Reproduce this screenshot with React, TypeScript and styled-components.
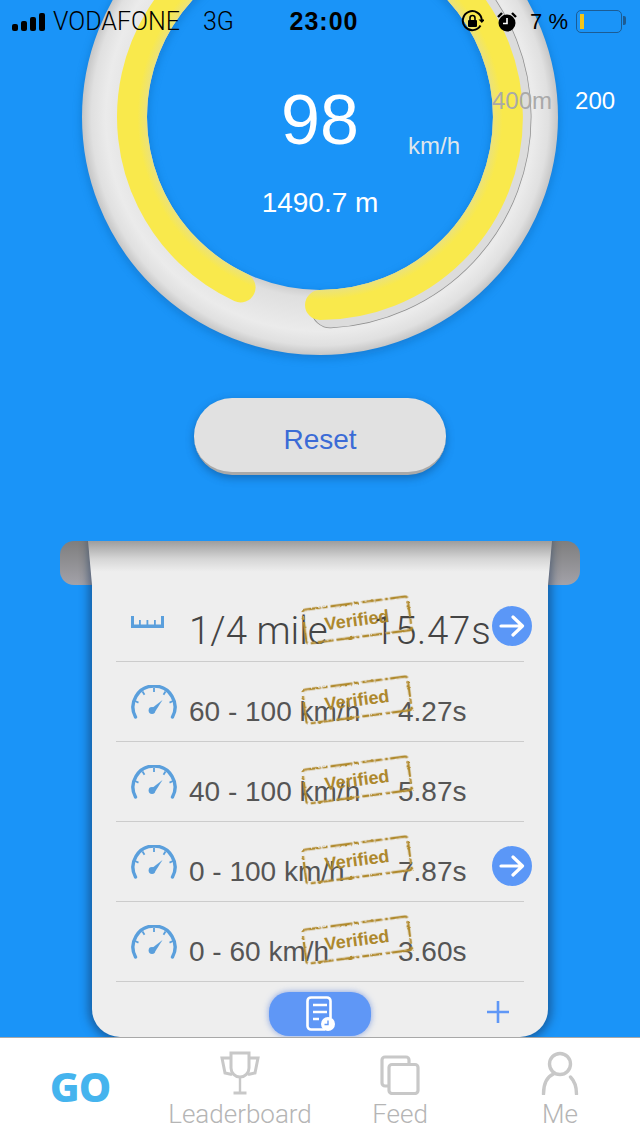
import styled, { createGlobalStyle } from "styled-components";

const GlobalStyle = createGlobalStyle`
  html, body {
    margin: 0;
    padding: 0;
    background: #1a94f8;
  }
  * {
    box-sizing: border-box;
  }
`;

const CX = 320;
const CY = 117;

// point on a circle around the gauge centre, angle 0 = straight down, going counter clockwise on screen
const polar = (r: number, deg: number) => {
  const a = (deg * Math.PI) / 180;
  return `${CX + r * Math.sin(a)} ${CY + r * Math.cos(a)}`;
};

const arc = (r: number, from: number, to: number) =>
  `M ${polar(r, from)} A ${r} ${r} 0 ${to - from > 180 ? 1 : 0} 0 ${polar(r, to)}`;

const Gauge = () => (
  <GaugeSvg viewBox="0 0 640 398" aria-hidden="true">
    <defs>
      <radialGradient id="ring" gradientUnits="userSpaceOnUse" cx={CX} cy={CY} r="238">
        <stop offset="0.727" stopColor="#d0d0d0" />
        <stop offset="0.76" stopColor="#dfdfdf" />
        <stop offset="0.9" stopColor="#ebebeb" />
        <stop offset="0.96" stopColor="#e0e0e0" />
        <stop offset="1" stopColor="#c6c6c6" />
      </radialGradient>
      <radialGradient id="fuel" gradientUnits="userSpaceOnUse" cx={CX} cy={CY} r="205">
        <stop offset="0.845" stopColor="#ebe27a" />
        <stop offset="0.89" stopColor="#f9e94c" />
        <stop offset="1" stopColor="#f9e94c" />
      </radialGradient>
      <filter id="soft" x="-20%" y="-20%" width="140%" height="140%">
        <feGaussianBlur stdDeviation="4" />
      </filter>
    </defs>
    <circle
      cx={CX}
      cy={CY + 3}
      r="205.500"
      fill="none"
      stroke="#0f5fa8"
      strokeWidth="67"
      opacity="0.4"
      filter="url(#soft)"
    />
    <circle cx={CX} cy={CY} r="205.500" fill="none" stroke="url(#ring)" strokeWidth="65" />
    <path d={arc(192.500, 3, 178)} fill="none" stroke="#8f8f8f" strokeWidth="38" strokeLinecap="round" />
    <path d={arc(192.500, 3, 178)} fill="none" stroke="#dcdcdc" strokeWidth="36.500" strokeLinecap="round" />
    <path
      d={`${arc(188, 0, 180)} ${arc(188, 180, 335).replace("M", "L")}`}
      fill="none"
      stroke="url(#fuel)"
      strokeWidth="30"
      strokeLinecap="round"
    />
  </GaugeSvg>
);

const Signal = () => (
  <svg width="34" height="18" viewBox="0 0 34 18" fill="#000" aria-hidden="true">
    <rect x="0" y="11" width="6" height="7" rx="2" />
    <rect x="9" y="8" width="6" height="10" rx="2" />
    <rect x="18" y="4" width="6" height="14" rx="2" />
    <rect x="27" y="0" width="6" height="18" rx="2" />
  </svg>
);

const RotationLock = () => (
  <svg width="23" height="23" viewBox="0 0 23 23" fill="none" aria-hidden="true">
    <path d="M19.500 15.500A9.500 9.500 0 1 1 20.800 10" stroke="#000" strokeWidth="2" />
    <path d="M17.500 9.500h6.500l-3.200 3.600z" fill="#000" />
    <rect x="7" y="10" width="9" height="7" rx="1" fill="#000" />
    <path d="M9 10V8a2.500 2.500 0 0 1 5 0v2" stroke="#000" strokeWidth="1.600" />
  </svg>
);

const Alarm = () => (
  <svg width="20" height="20" viewBox="0 0 20 20" aria-hidden="true">
    <circle cx="10" cy="11" r="8.500" fill="#000" />
    <path d="M10 6v5.500H6" fill="none" stroke="#fff" strokeWidth="1.600" />
    <path d="M1 5l4-4M19 5l-4-4" stroke="#000" strokeWidth="2.400" />
  </svg>
);

const Battery = () => (
  <BatteryShell>
    <BatteryLevel />
  </BatteryShell>
);

const SpeedIcon = () => (
  <svg width="46" height="34" viewBox="0 0 46 34" fill="none" stroke="#5a9fdc" aria-hidden="true">
    <path d="M4.500 32A21 21 0 1 1 41.500 32" strokeWidth="3.400" strokeLinecap="round" />
    <path
      d="M23 3v4M11.500 6.500l2 3.200M34.500 6.500l-2 3.200M4 16l3.500 1.600M42 16l-3.500 1.600"
      strokeWidth="1.800"
    />
    <path d="M20.500 23.500l11-8.500-7 11z" fill="#5a9fdc" stroke="none" />
    <circle cx="21" cy="25.500" r="3.400" fill="#5a9fdc" stroke="none" />
  </svg>
);

const RulerIcon = () => (
  <svg width="33" height="12" viewBox="0 0 33 12" fill="#5a9fdc" aria-hidden="true">
    <rect x="0" y="8.500" width="33" height="3.500" />
    <rect x="0" y="0" width="3" height="10" />
    <rect x="8" y="4" width="1.800" height="6" />
    <rect x="15.500" y="4" width="1.800" height="6" />
    <rect x="23" y="4" width="1.800" height="6" />
    <rect x="30" y="0" width="3" height="10" />
  </svg>
);

const StampFrame = () => (
  <StampSvg viewBox="0 0 110 38" fill="none" aria-hidden="true">
    <defs>
      <filter id="grunge" x="-5%" y="-15%" width="110%" height="130%">
        <feTurbulence type="fractalNoise" baseFrequency="0.35" numOctaves="2" seed="4" />
        <feDisplacementMap in="SourceGraphic" scale="2.500" />
      </filter>
    </defs>
    <g filter="url(#grunge)">
      <rect
        x="2"
        y="2"
        width="106"
        height="34"
        rx="2.500"
        stroke="#b08a2e"
        strokeWidth="2.400"
        strokeDasharray="16 2 5 3 22 2 4 4 12 1 7 3 3 2 18 3"
      />
      <rect
        x="2.500"
        y="2.500"
        width="105"
        height="33"
        rx="2"
        stroke="#c4a258"
        strokeWidth="1"
        strokeDasharray="5 9 3 14"
      />
    </g>
  </StampSvg>
);

const ArrowBadge = () => (
  <Arrow>
    <svg width="28" height="26" viewBox="0 0 28 26" fill="none" aria-hidden="true">
      <path
        d="M3 13h21M15 4l9.500 9L15 22"
        stroke="#fff"
        strokeWidth="3.200"
        strokeLinecap="round"
        strokeLinejoin="round"
      />
    </svg>
  </Arrow>
);

const HistoryIcon = () => (
  <svg width="30" height="36" viewBox="0 0 30 36" fill="none" aria-hidden="true">
    <path
      d="M20 33.500H6a3.500 3.500 0 0 1-3.500-3.500V5A3.500 3.500 0 0 1 6 1.500h16A3.500 3.500 0 0 1 25.500 5v17"
      stroke="#fff"
      strokeWidth="2.600"
    />
    <path d="M8 9h14M8 16h14M8 23h6" stroke="#fff" strokeWidth="2.400" />
    <circle cx="23" cy="28" r="7" fill="#fff" />
    <path d="M23 24.500V28.500h-3.500" stroke="#5f97f6" strokeWidth="1.400" />
  </svg>
);

const TrophyIcon = () => (
  <svg width="40" height="44" viewBox="0 0 40 44" fill="none" stroke="#c8c8c8" strokeWidth="3" aria-hidden="true">
    <path d="M11 2h18v15a9 9 0 0 1-18 0z" />
    <path d="M11 7H2l3 15 7 1.500M29 7h9l-3 15-7 1.500" />
    <path d="M20 26v15" strokeWidth="2.400" />
    <path d="M13.500 42h13" />
  </svg>
);

const FeedIcon = () => (
  <svg width="40" height="40" viewBox="0 0 40 40" fill="none" stroke="#c8c8c8" strokeWidth="3.200" aria-hidden="true">
    <path d="M8 31H5a3 3 0 0 1-3-3V5a3 3 0 0 1 3-3h21a3 3 0 0 1 3 3v4" />
    <rect x="9" y="9.500" width="29" height="29" rx="3" />
  </svg>
);

const PersonIcon = () => (
  <svg width="38" height="44" viewBox="0 0 38 44" fill="none" stroke="#c8c8c8" strokeWidth="3.400" aria-hidden="true">
    <circle cx="19" cy="13" r="10.500" />
    <path d="M2.500 43c0-9 3-17 10-20M35.500 43c0-7-2-13-6-17" strokeLinecap="round" />
  </svg>
);

const records = [
  { id: "quarter", label: "1/4 mile", time: "15.47s", lead: true, arrow: true },
  { id: "60-100", label: "60 - 100 km/h", time: "4.27s", lead: false, arrow: false },
  { id: "40-100", label: "40 - 100 km/h", time: "5.87s", lead: false, arrow: false },
  { id: "0-100", label: "0 - 100 km/h", time: "7.87s", lead: false, arrow: true },
  { id: "0-60", label: "0 - 60 km/h", time: "3.60s", lead: false, arrow: false },
];

const App = () => {
  return (
    <Page>
      <GlobalStyle />
      <StatusBar>
        <StatusGroup>
          <Signal />
          <Carrier>VODAFONE</Carrier>
          <Network>3G</Network>
        </StatusGroup>
        <Clock>23:00</Clock>
        <StatusGroup>
          <RotationLock />
          <AlarmSlot>
            <Alarm />
          </AlarmSlot>
          <Percent>7 %</Percent>
          <Battery />
        </StatusGroup>
      </StatusBar>

      <GaugeArea>
        <Gauge />
        <Speed>98</Speed>
        <Unit>km/h</Unit>
        <Distance>1490.7 m</Distance>
        <Targets>
          <Target>400m</Target>
          <Target $active>200</Target>
        </Targets>
      </GaugeArea>

      <ResetButton>Reset</ResetButton>

      <Scroll>
        <Roller />
        <Sheet>
          {records.map((record) => (
            <Row key={record.id} $lead={record.lead}>
              <RowIcon $lead={record.lead}>{record.lead ? <RulerIcon /> : <SpeedIcon />}</RowIcon>
              <Label $lead={record.lead}>{record.label}</Label>
              <Time $lead={record.lead}>{record.time}</Time>
              <Stamp>
                <StampFrame />
                <StampText>Verified</StampText>
              </Stamp>
              {record.arrow && <ArrowBadge />}
            </Row>
          ))}
          <SheetFooter>
            <span />
            <HistoryButton>
              <HistoryIcon />
            </HistoryButton>
            <AddButton>
              <svg width="24" height="24" viewBox="0 0 24 24" aria-hidden="true">
                <path d="M12 1v22M1 12h22" stroke="#5f97f6" strokeWidth="2.600" />
              </svg>
            </AddButton>
          </SheetFooter>
        </Sheet>
      </Scroll>

      <TabBar>
        <Tab>
          <GoMark>GO</GoMark>
        </Tab>
        <Tab>
          <TrophyIcon />
          <TabLabel>Leaderboard</TabLabel>
        </Tab>
        <Tab>
          <FeedIcon />
          <TabLabel>Feed</TabLabel>
        </Tab>
        <Tab>
          <PersonIcon />
          <TabLabel>Me</TabLabel>
        </Tab>
      </TabBar>
    </Page>
  );
};

const Page = styled.div`
  position: relative;
  display: flex;
  flex-direction: column;
  align-items: center;
  width: 640px;
  height: 1136px;
  overflow: hidden;
  background: #1a94f8;
  font-family: "Liberation Sans", Arial, sans-serif;
`;

const StatusBar = styled.div`
  position: absolute;
  z-index: 3;
  top: 7px;
  left: 12px;
  right: 18px;
  display: grid;
  grid-template-columns: 1fr auto 1fr;
  align-items: center;
  height: 28px;
  color: #000;
  font-size: 22px;

  & > div:last-child {
    justify-self: end;
  }
`;

const StatusGroup = styled.div`
  display: flex;
  align-items: center;
`;

const Carrier = styled.span`
  margin-left: 7px;
  font-family: "Roboto", sans-serif;
  font-weight: 300;
  font-size: 25px;
`;

const Network = styled.span`
  margin-left: 23px;
  font-family: "Roboto", sans-serif;
  font-weight: 300;
  font-size: 25px;
`;

const Clock = styled.span`
  margin-left: 14px;
  font-weight: 700;
  font-size: 25px;
  letter-spacing: 1px;
`;

const AlarmSlot = styled.span`
  display: flex;
  margin-left: 13px;
`;

const Percent = styled.span`
  margin: 0 8px 0 13px;
`;

const BatteryShell = styled.div`
  position: relative;
  width: 46px;
  height: 23px;
  padding: 3px;
  border: 1.500px solid #1c5c94;
  border-radius: 5px;

  &::after {
    content: "";
    position: absolute;
    top: 5px;
    right: -5px;
    width: 3px;
    height: 9px;
    border-radius: 0 2px 2px 0;
    background: #1c5c94;
  }
`;

const BatteryLevel = styled.div`
  width: 4px;
  height: 100%;
  background: #f5c518;
`;

const GaugeArea = styled.div`
  position: relative;
  flex: none;
  width: 640px;
  height: 398px;
`;

const GaugeSvg = styled.svg`
  display: block;
  width: 640px;
  height: 398px;
`;

const Speed = styled.div`
  position: absolute;
  top: 80px;
  left: 0;
  width: 640px;
  color: #fff;
  font-size: 70px;
  line-height: 80px;
  text-align: center;
`;

const Unit = styled.div`
  position: absolute;
  top: 133px;
  left: 408px;
  color: #dfe6ec;
  font-size: 24px;
  line-height: 26px;
`;

const Distance = styled.div`
  position: absolute;
  top: 187px;
  left: 0;
  width: 640px;
  color: #fff;
  font-size: 28px;
  line-height: 32px;
  text-align: center;
`;

const Targets = styled.div`
  position: absolute;
  top: 87px;
  left: 492px;
  display: flex;
  gap: 23px;
`;

const Target = styled.span<{ $active?: boolean }>`
  color: ${(p) => (p.$active ? "#fff" : "#a9a9a9")};
  font-size: 24px;
  line-height: 28px;
`;

const ResetButton = styled.button`
  flex: none;
  width: 252px;
  height: 77px;
  padding: 10px 0 0;
  border: none;
  border-bottom: 3px solid #a9a9a9;
  border-radius: 38px;
  background: #e1e1e1;
  box-shadow: 0 3px 8px rgba(10, 60, 110, 0.45);
  color: #3b6bd6;
  font-family: inherit;
  font-size: 28px;
`;

const Scroll = styled.div`
  position: relative;
  flex: 1;
  display: flex;
  flex-direction: column;
  align-items: center;
  width: 520px;
  margin-top: 66px;
`;

const Roller = styled.div`
  flex: none;
  width: 520px;
  height: 44px;
  border-radius: 14px;
  background: linear-gradient(#7e7e7e, #a3a2a9);
`;

const Sheet = styled.div`
  position: relative;
  flex: 1;
  width: 456px;
  margin-top: -44px;
  padding: 41px 24px 0;
  border-radius: 0 0 28px 28px;
  background: #eeeeee;
  box-shadow: 0 0 9px 4px rgba(20, 50, 90, 0.5);
  clip-path: inset(0 -20px 0 -20px);

  &::before {
    content: "";
    position: absolute;
    top: 0;
    left: -4px;
    right: -4px;
    height: 44px;
    clip-path: polygon(0 0, 100% 0, calc(100% - 4px) 100%, 4px 100%);
    background: linear-gradient(#9d9d9d 0%, #d5d5d5 40%, #eeeeee 70%);
  }
`;

const Row = styled.div<{ $lead: boolean }>`
  position: relative;
  display: grid;
  grid-template-columns: 73px ${(p) => (p.$lead ? "184px" : "209px")} auto;
  align-items: end;
  height: 80px;
  padding-bottom: ${(p) => (p.$lead ? "8px" : "15px")};
  border-bottom: 1px solid #cccccc;
`;

const RowIcon = styled.div<{ $lead: boolean }>`
  display: flex;
  margin: 0 0 ${(p) => (p.$lead ? "25px" : "7px")} 15px;
`;

const Label = styled.span<{ $lead: boolean }>`
  color: ${(p) => (p.$lead ? "#444444" : "#555555")};
  font-family: ${(p) => (p.$lead ? '"Roboto", sans-serif' : "inherit")};
  font-weight: ${(p) => (p.$lead ? 300 : 400)};
  font-size: ${(p) => (p.$lead ? "38.500px" : "28px")};
  line-height: ${(p) => (p.$lead ? "44px" : "28px")};
  white-space: nowrap;
`;

const Time = styled(Label)`
  letter-spacing: ${(p) => (p.$lead ? "0.7px" : "0")};
`;

const Stamp = styled.div`
  position: absolute;
  top: 19px;
  left: 186px;
  display: flex;
  align-items: center;
  justify-content: center;
  width: 110px;
  height: 38px;
  transform: rotate(-7.500deg);
`;

const StampSvg = styled.svg`
  position: absolute;
  inset: 0;
`;

const StampText = styled.span`
  color: #ad882d;
  font-weight: 700;
  font-size: 18px;
`;

const Arrow = styled.div`
  position: absolute;
  top: 24px;
  right: -8px;
  display: flex;
  align-items: center;
  justify-content: center;
  width: 40px;
  height: 40px;
  border-radius: 50%;
  background: #5b97f7;
`;

const SheetFooter = styled.div`
  display: grid;
  grid-template-columns: 1fr 102px 1fr;
  align-items: start;
  height: 55px;
  padding-top: 10px;
`;

const HistoryButton = styled.div`
  display: flex;
  align-items: center;
  justify-content: center;
  height: 44px;
  border-radius: 20px;
  background: #5f97f6;
  box-shadow: 0 0 6px rgba(60, 110, 220, 0.6);
`;

const AddButton = styled.div`
  display: flex;
  justify-content: flex-end;
  margin: 8px 14px 0 0;
`;

const TabBar = styled.div`
  position: relative;
  z-index: 2;
  flex: none;
  display: grid;
  grid-template-columns: repeat(4, 160px);
  width: 640px;
  height: 99px;
  border-top: 1px solid #a8a8a8;
  background: #fff;
`;

const Tab = styled.div`
  display: flex;
  flex-direction: column;
  align-items: center;
  justify-content: flex-end;
  padding-bottom: 8px;
  color: #b5b5b5;
`;

const TabLabel = styled.span`
  margin-top: 5px;
  font-family: "Roboto", sans-serif;
  font-weight: 300;
  font-size: 26px;
  line-height: 28px;
`;

const GoMark = styled.span`
  margin-bottom: 20px;
  color: #45b4ee;
  font-family: "Noto Sans", sans-serif;
  font-weight: 800;
  font-size: 41px;
  line-height: 44px;
  letter-spacing: -1px;
`;

export default App;
